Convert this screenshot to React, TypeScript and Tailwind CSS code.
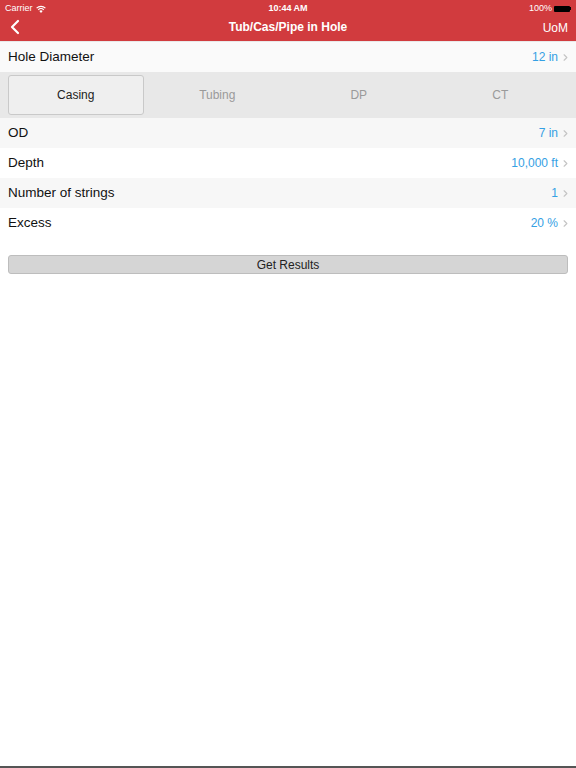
import { ChevronRight } from "lucide-react";

const rows = [
  { label: "OD", value: "7 in", shade: true },
  { label: "Depth", value: "10,000 ft", shade: false },
  { label: "Number of strings", value: "1", shade: true },
  { label: "Excess", value: "20 %", shade: false },
];

const tabs = ["Casing", "Tubing", "DP", "CT"];

function Row({ label, value, shade }: { label: string; value: string; shade?: boolean }) {
  return (
    <div className={`flex h-[30px] items-center justify-between pl-2 pr-[5px] ${shade ? "bg-[#f7f7f7]" : "bg-white"}`}>
      <span className="text-[13.5px] text-[#111]">{label}</span>
      <span className="flex items-center gap-[2px] text-[12px] text-[#34a0e4]">
        {value}
        <ChevronRight className="h-[11px] w-[11px] text-[#c4c4c4]" strokeWidth={2.5} />
      </span>
    </div>
  );
}

export default function App() {
  return (
    <div className="flex h-[768px] w-[576px] flex-col bg-white font-['Liberation_Sans',Arial,sans-serif]">
      {/* Header */}
      <header className="bg-[#d13b3e] text-white">
        <div className="flex h-[16px] items-center justify-between px-[5px] pt-[1px] text-[9px]">
          <div className="flex w-[120px] items-center gap-[3px]">
            <span>Carrier</span>
            <svg width="10" height="8" viewBox="0 0 10 8" fill="white">
              <path d="M5 8 L3.3 6.1 A2.5 2.5 0 0 1 6.7 6.1 Z" />
              <path d="M1.8 4.4 A4.6 4.6 0 0 1 8.2 4.4 L7.4 5.3 A3.4 3.4 0 0 0 2.6 5.3 Z" />
              <path d="M0.2 2.7 A6.9 6.9 0 0 1 9.8 2.7 L9 3.6 A5.7 5.7 0 0 0 1 3.6 Z" />
            </svg>
          </div>
          <span className="font-semibold">10:44 AM</span>
          <div className="flex w-[120px] items-center justify-end gap-[2px]">
            <span>100%</span>
            <div className="flex items-center">
              <div className="h-[6px] w-[16px] rounded-[1px] bg-black" />
              <div className="h-[3px] w-[1px] bg-black" />
            </div>
          </div>
        </div>
        <div className="relative flex h-[25px] items-center justify-center pb-[4px]">
          <svg className="absolute left-[9px] top-[3px]" width="12" height="16" viewBox="0 0 12 16" fill="none">
            <path d="M9 2 L3 8 L9 14" stroke="white" strokeWidth="2.2" strokeLinecap="round" strokeLinejoin="round" />
          </svg>
          <span className="text-[12px] font-bold">Tub/Cas/Pipe in Hole</span>
          <span className="absolute right-[8px] top-[3px] text-[12px]">UoM</span>
        </div>
      </header>

      <div className="h-[1px] bg-[#e9e9e9]" />

      {/* Hole diameter */}
      <div className="flex h-[30px] items-center justify-between bg-[#fafafa] pl-2 pr-[5px]">
        <span className="text-[13.5px] text-[#111]">Hole Diameter</span>
        <span className="flex items-center gap-[2px] text-[12px] text-[#34a0e4]">
          12 in
          <ChevronRight className="h-[11px] w-[11px] text-[#c4c4c4]" strokeWidth={2.5} />
        </span>
      </div>

      {/* Segments */}
      <div className="grid h-[46px] grid-cols-4 bg-[#e8e8e8] px-[5px] py-[3px]">
        {tabs.map((t, i) => (
          <div
            key={t}
            className={`mx-[3px] flex items-center justify-center rounded-[3px] text-[12px] ${
              i === 0 ? "border border-[#c9c9c9] bg-[#efefef] text-[#222]" : "text-[#9a9a9a]"
            }`}
          >
            {t}
          </div>
        ))}
      </div>

      {rows.map((r) => (
        <Row key={r.label} {...r} />
      ))}

      <div className="px-2 pt-[17px]">
        <button className="flex h-[19px] w-full items-center justify-center rounded-[3px] border border-[#bdbdbd] bg-[#d5d5d5] text-[12px] text-[#222]">
          Get Results
        </button>
      </div>

      <div className="flex-1" />
      <div className="h-[2px] bg-[#555]" />
    </div>
  );
}
